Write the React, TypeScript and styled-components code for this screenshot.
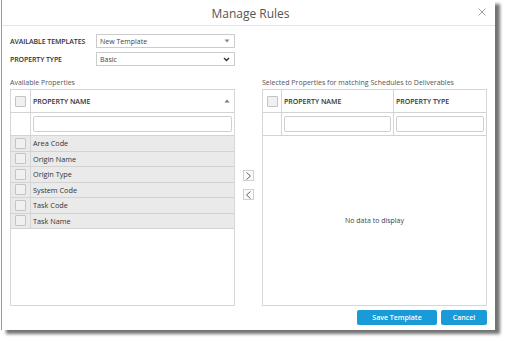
import React from "react";
import styled, { createGlobalStyle } from "styled-components";

const Global = createGlobalStyle`
  html, body { margin: 0; padding: 0; background: #fff; }
  body { font-family: "Open Sans", "Liberation Sans", sans-serif; color: #444; }
  * { box-sizing: border-box; }
`;

const Page = styled.div`
  width: 507px;
  height: 341px;
  padding-left: 1px;
  overflow: hidden;
`;

const Dialog = styled.div`
  width: 494px;
  height: 330px;
  background: #fff;
  border-left: 1px solid #9a9a9a;
  box-shadow: 5px 4px 3px rgba(0, 0, 0, 0.55);
  display: flex;
  flex-direction: column;
`;

const Header = styled.div`
  height: 28px;
  border-bottom: 1px solid #e3e3e3;
  display: flex;
  align-items: center;
  justify-content: center;
  position: relative;
`;

const Title = styled.div`
  font-size: 12px;
  color: #555;
  margin-top: 2px;
  margin-left: 4px;
`;

const Close = styled.div`
  position: absolute;
  right: 8px;
  top: 7px;
  width: 10px;
  height: 10px;
  display: flex;
`;

const Body = styled.div`
  flex: 1;
  padding: 8px 8px 5px 8px;
  display: flex;
  flex-direction: column;
`;

const FormRow = styled.div`
  display: flex;
  align-items: center;
  height: 14px;
  margin-bottom: 4px;
`;

const Label = styled.div`
  width: 86px;
  font-size: 7px;
  font-weight: 600;
  color: #333;
  letter-spacing: -0.1px;
`;

const Select = styled.div`
  width: 139px;
  height: 14px;
  border: 1px solid #ccc;
  display: flex;
  align-items: center;
  justify-content: space-between;
  padding: 0 4px 0 3px;
  font-size: 7px;
  color: #444;
`;

const Panels = styled.div`
  display: flex;
  margin-top: 8px;
  flex: 1;
`;

const Panel = styled.div`
  width: 225px;
  display: flex;
  flex-direction: column;
`;

const PanelLabel = styled.div`
  font-size: 7px;
  color: #555;
  height: 11px;
  line-height: 9px;
`;

const Grid = styled.div`
  border: 1px solid #d6d6d6;
  height: 217px;
  display: flex;
  flex-direction: column;
`;

const Row = styled.div<{ $cols: string; $h: number; $bg?: string }>`
  display: grid;
  grid-template-columns: ${(p) => p.$cols};
  height: ${(p) => p.$h}px;
  background: ${(p) => p.$bg || "#fff"};
  border-bottom: 1px solid #d3d3d3;
`;

const Cell = styled.div<{ $last?: boolean }>`
  display: flex;
  align-items: center;
  padding: 0 2px;
  border-right: ${(p) => (p.$last ? "none" : "1px solid #d6d6d6")};
  font-size: 7.3px;
  color: #333;
`;

const HeadCell = styled(Cell)`
  font-weight: 600;
  font-size: 7px;
  color: #333;
  justify-content: space-between;
`;

const CheckCell = styled(Cell)`
  justify-content: center;
  padding: 0;
`;

const Check = styled.div`
  width: 11px;
  height: 11px;
  border: 1px solid #c4c4c4;
  border-radius: 1px;
  background: #f0f0f0;
`;

const FilterInput = styled.div`
  flex: 1;
  height: 16px;
  border: 1px solid #cfcfcf;
  border-radius: 2px;
  background: #fff;
`;

const Empty = styled.div`
  flex: 1;
  display: flex;
  align-items: center;
  justify-content: center;
  font-size: 7px;
  color: #444;
  padding-bottom: 1px;
`;

const Middle = styled.div`
  width: 27px;
  display: flex;
  flex-direction: column;
  align-items: center;
  padding-top: 92px;
  gap: 8px;
`;

const ArrowBtn = styled.div`
  width: 11px;
  height: 11px;
  border: 1px solid #d0d0d0;
  background: #fafafa;
  display: flex;
  align-items: center;
  justify-content: center;
`;

const Footer = styled.div`
  display: flex;
  justify-content: flex-end;
  gap: 4px;
  margin-top: 4px;
`;

const Button = styled.div<{ $w: number }>`
  width: ${(p) => p.$w}px;
  height: 15px;
  background: #1b9ad8;
  border-radius: 2px;
  color: #fff;
  font-size: 7px;
  font-weight: 600;
  display: flex;
  align-items: center;
  justify-content: center;
`;

const leftCols = "20px 1fr";
const rightCols = "19px 112px 1fr";

const items = ["Area Code", "Origin Name", "Origin Type", "System Code", "Task Code", "Task Name"];

export default function App() {
  return (
    <Page>
      <Global />
      <Dialog>
        <Header>
          <Title>Manage Rules</Title>
          <Close>
            <svg width="10" height="10" viewBox="0 0 10 10">
              <path d="M1.5 1.5 L8.5 8.5 M8.5 1.5 L1.5 8.5" stroke="#999" strokeWidth="0.9" />
            </svg>
          </Close>
        </Header>
        <Body>
          <FormRow>
            <Label>AVAILABLE TEMPLATES</Label>
            <Select>
              <span>New Template</span>
              <svg width="6" height="4" viewBox="0 0 6 4">
                <path d="M0.5 0.5 L5.5 0.5 L3 3.5 Z" fill="#888" />
              </svg>
            </Select>
          </FormRow>
          <FormRow>
            <Label>PROPERTY TYPE</Label>
            <Select>
              <span>Basic</span>
              <svg width="7" height="5" viewBox="0 0 7 5">
                <path d="M1 1 L3.5 3.5 L6 1" stroke="#333" strokeWidth="1.4" fill="none" />
              </svg>
            </Select>
          </FormRow>
          <Panels>
            <Panel>
              <PanelLabel>Available Properties</PanelLabel>
              <Grid>
                <Row $cols={leftCols} $h={23}>
                  <CheckCell><Check /></CheckCell>
                  <HeadCell $last>
                    <span>PROPERTY NAME</span>
                    <svg width="6" height="4" viewBox="0 0 6 4" style={{ marginRight: 2 }}>
                      <path d="M0.5 3.5 L5.5 3.5 L3 0.5 Z" fill="#777" />
                    </svg>
                  </HeadCell>
                </Row>
                <Row $cols={leftCols} $h={23}>
                  <Cell />
                  <Cell $last><FilterInput /></Cell>
                </Row>
                {items.map((t) => (
                  <Row key={t} $cols={leftCols} $h={15.5} $bg="#eaeaea">
                    <CheckCell><Check /></CheckCell>
                    <Cell $last>{t}</Cell>
                  </Row>
                ))}
              </Grid>
            </Panel>
            <Middle>
              <ArrowBtn>
                <svg width="7" height="8" viewBox="0 0 7 8">
                  <path d="M1.5 0.5 L5.5 4 L1.5 7.5" stroke="#555" strokeWidth="0.9" fill="none" />
                </svg>
              </ArrowBtn>
              <ArrowBtn>
                <svg width="7" height="8" viewBox="0 0 7 8">
                  <path d="M5.5 0.5 L1.5 4 L5.5 7.5" stroke="#555" strokeWidth="0.9" fill="none" />
                </svg>
              </ArrowBtn>
            </Middle>
            <Panel>
              <PanelLabel>Selected Properties for matching Schedules to Deliverables</PanelLabel>
              <Grid>
                <Row $cols={rightCols} $h={23}>
                  <CheckCell><Check /></CheckCell>
                  <HeadCell>PROPERTY NAME</HeadCell>
                  <HeadCell $last>PROPERTY TYPE</HeadCell>
                </Row>
                <Row $cols={rightCols} $h={23}>
                  <Cell />
                  <Cell><FilterInput /></Cell>
                  <Cell $last><FilterInput /></Cell>
                </Row>
                <Empty>No data to display</Empty>
              </Grid>
            </Panel>
          </Panels>
          <Footer>
            <Button $w={80}>Save Template</Button>
            <Button $w={46}>Cancel</Button>
          </Footer>
        </Body>
      </Dialog>
    </Page>
  );
}
